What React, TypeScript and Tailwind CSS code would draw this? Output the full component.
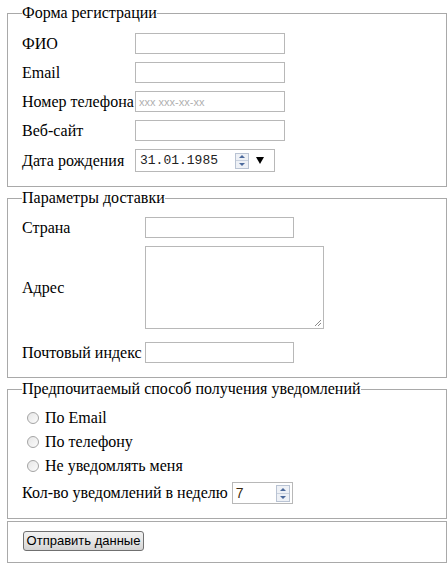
import React from "react";

const sans = "font-['Liberation_Sans',Arial,sans-serif]";
const serif = "font-['Liberation_Serif','Times_New_Roman',serif]";

function TextBox({ w, children }: { w: string; children?: React.ReactNode }) {
	return (
		<div className={`${w} h-[21px] border border-[#b8b8b8] bg-white flex items-center px-[3px]`}>
			{children}
		</div>
	);
}

function Spinner({ h }: { h: string }) {
	return (
		<div className={`w-[14px] ${h} flex flex-col border border-[#b9c3d3] bg-[#eef1f6]`}>
			<div className="flex-1 flex items-center justify-center border-b border-[#c9d1de]">
				<div className="w-0 h-0 border-l-[3px] border-r-[3px] border-b-[3px] border-l-transparent border-r-transparent border-b-[#4c6a9c]" />
			</div>
			<div className="flex-1 flex items-center justify-center">
				<div className="w-0 h-0 border-l-[3px] border-r-[3px] border-t-[3px] border-l-transparent border-r-transparent border-t-[#4c6a9c]" />
			</div>
		</div>
	);
}

function Label({ w, children }: { w?: string; children: React.ReactNode }) {
	return <span className={`${w ?? ""} ${serif}`}>{children}</span>;
}

function Radio({ label }: { label: string }) {
	return (
		<div className="h-[24px] flex items-center">
			<span className="ml-[5px] w-[12px] h-[12px] rounded-full border border-[#a4a4a4] bg-gradient-to-br from-[#e6e6e6] to-[#fbfbfb]" />
			<span className={`ml-[6px] ${serif}`}>{label}</span>
		</div>
	);
}

export default function App() {
	const reg = ["ФИО", "Email", "Номер телефона", "Веб-сайт"];

	return (
		<div className="min-h-screen bg-white text-black pt-[4px] text-[16px] leading-[18px]">
			{/* Регистрация */}
			<fieldset className="ml-[7px] w-[440px] border border-[#a9a9a9] pl-[14px] pr-[14px] pt-[11px] pb-[14px]">
				<legend className={`px-0 ${serif}`}>Форма регистрации</legend>
				{reg.map((l, i) => (
					<div key={l} className="flex items-center mb-[8px]">
						<Label w="w-[113px]">{l}</Label>
						<TextBox w="w-[150px]">
							{i === 2 && <span className={`text-[11px] text-[#b0b0b0] ${sans}`}>xxx xxx-xx-xx</span>}
						</TextBox>
					</div>
				))}
				<div className="flex items-center">
					<Label w="w-[113px]">Дата рождения</Label>
					<div className="w-[140px] h-[23px] border border-[#b8b8b8] flex items-center pl-[4px]">
						<span className="text-[13px] text-[#222] font-['Liberation_Mono','Courier_New',monospace]">31.01.1985</span>
						<div className="ml-[17px]">
							<Spinner h="h-[16px]" />
						</div>
						<div className="ml-[7px] w-0 h-0 border-l-[4px] border-r-[4px] border-t-[7px] border-l-transparent border-r-transparent border-t-black" />
					</div>
				</div>
			</fieldset>

			{/* Доставка */}
			<fieldset className="mt-[2px] ml-[7px] w-[440px] border border-[#a9a9a9] pl-[14px] pr-[14px] pt-[10px] pb-[14px]">
				<legend className={`px-0 ${serif}`}>Параметры доставки</legend>
				<div className="flex items-center mb-[8px]">
					<Label w="w-[123px]">Страна</Label>
					<TextBox w="w-[149px]" />
				</div>
				<div className="flex items-center mb-[13px]">
					<Label w="w-[123px]">Адрес</Label>
					<div className="relative w-[179px] h-[83px] border border-[#b8b8b8]">
						<svg className="absolute right-[1px] bottom-[1px]" width="8" height="8" viewBox="0 0 8 8">
							<path d="M7 1L1 7M7 4L4 7" stroke="#8a8a8a" strokeWidth="1" />
						</svg>
					</div>
				</div>
				<div className="flex items-center">
					<Label w="w-[123px]">Почтовый индекс</Label>
					<TextBox w="w-[149px]" />
				</div>
			</fieldset>

			{/* Уведомления */}
			<fieldset className="mt-[2px] ml-[7px] w-[440px] border border-[#a9a9a9] pl-[14px] pr-[14px] pt-[8px] pb-[14px]">
				<legend className={`px-0 ${serif}`}>Предпочитаемый способ получения уведомлений</legend>
				<Radio label="По Email" />
				<Radio label="По телефону" />
				<Radio label="Не уведомлять меня" />
				<div className="flex items-center mt-[4px]">
					<Label>Кол-во уведомлений в неделю</Label>
					<div className="ml-[4px] w-[61px] h-[22px] border border-[#b8b8b8] flex items-center pl-[3px] pr-[2px]">
						<span className={`text-[14px] text-[#3b2a10] flex-1 ${sans}`}>7</span>
						<Spinner h="h-[17px]" />
					</div>
				</div>
			</fieldset>

			{/* Отправка */}
			<fieldset className="mt-[2px] ml-[7px] w-[440px] border border-[#a9a9a9] pl-[15px] pr-[14px] pt-[8px] pb-[11px]">
				<button
					className={`w-[121px] h-[20px] rounded-[3px] border border-[#707070] bg-gradient-to-b from-[#f2f2f2] via-[#e6e6e6] to-[#d3d3d3] text-[13px] leading-[18px] text-black ${sans}`}
				>
					Отправить данные
				</button>
			</fieldset>
		</div>
	);
}
